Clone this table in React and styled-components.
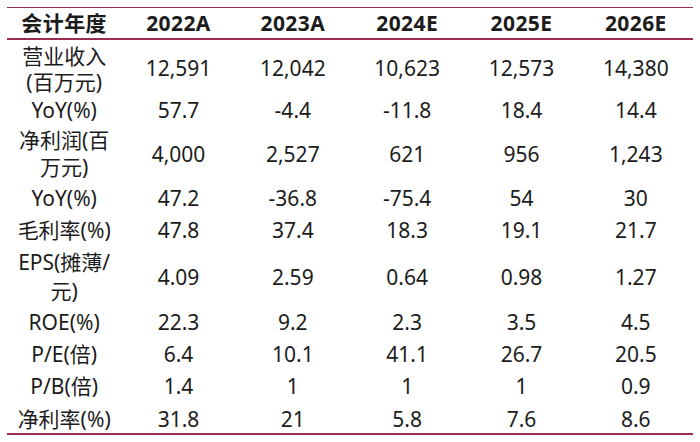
import React from "react";
import styled, { createGlobalStyle } from "styled-components";

const Global = createGlobalStyle`
  html, body { margin: 0; padding: 0; background: #ffffff; }
  body { width: 700px; height: 442px; overflow: hidden; }
`;

const Page = styled.div`
  padding: 7px 7px 0 7px;
  font-family: "Noto Sans", "Noto Sans CJK SC", sans-serif;
  color: #1c1c1c;
`;

const Table = styled.table`
  width: 686px;
  border-collapse: collapse;
  table-layout: fixed;
  border-top: 1px solid #9b2d52;
  border-bottom: 2px solid #9b2d52;
`;

const HeadRow = styled.tr`
  height: 31px;
  border-bottom: 2px solid #9b2d52;
`;

const HeadCell = styled.th`
  font-weight: 700;
  font-size: 21px;
  letter-spacing: 0.4px;
  text-align: center;
  vertical-align: middle;
  padding: 0;
  line-height: 26px;
`;

const Row = styled.tr`
  height: ${(p) => p.$h}px;
`;

const Cell = styled.td`
  font-size: 21px;
  text-align: center;
  vertical-align: middle;
  padding: ${(p) => p.$pt || 0}px 0 0 0;
  line-height: ${(p) => p.$lh || 27}px;
`;

const Label = styled(Cell)`
  white-space: pre-line;
`;

const headers = ["会计年度", "2022A", "2023A", "2024E", "2025E", "2026E"];

const rows = [
  { label: "营业收入\n(百万元)", h: 57, lh: 26, pt: 2, v: ["12,591", "12,042", "10,623", "12,573", "14,380"] },
  { label: "YoY(%)", h: 30, v: ["57.7", "-4.4", "-11.8", "18.4", "14.4"] },
  { label: "净利润(百\n万元)", h: 57, v: ["4,000", "2,527", "621", "956", "1,243"] },
  { label: "YoY(%)", h: 31, v: ["47.2", "-36.8", "-75.4", "54", "30"] },
  { label: "毛利率(%)", h: 34, v: ["47.8", "37.4", "18.3", "19.1", "21.7"] },
  { label: "EPS(摊薄/\n元)", h: 59, lh: 29, v: ["4.09", "2.59", "0.64", "0.98", "1.27"] },
  { label: "ROE(%)", h: 32, v: ["22.3", "9.2", "2.3", "3.5", "4.5"] },
  { label: "P/E(倍)", h: 32, v: ["6.4", "10.1", "41.1", "26.7", "20.5"] },
  { label: "P/B(倍)", h: 32, v: ["1.4", "1", "1", "1", "0.9"] },
  { label: "净利率(%)", h: 28, pt: 3, v: ["31.8", "21", "5.8", "7.6", "8.6"] },
];

export default function App() {
  return (
    <>
      <Global />
      <Page>
        <Table>
          <thead>
            <HeadRow>
              {headers.map((h) => (
                <HeadCell key={h}>{h}</HeadCell>
              ))}
            </HeadRow>
          </thead>
          <tbody>
            {rows.map((r, i) => (
              <Row key={i} $h={r.h}>
                <Label $lh={r.lh} $pt={r.pt}>{r.label}</Label>
                {r.v.map((v, j) => (
                  <Cell key={j} $pt={r.pt}>{v}</Cell>
                ))}
              </Row>
            ))}
          </tbody>
        </Table>
      </Page>
    </>
  );
}
